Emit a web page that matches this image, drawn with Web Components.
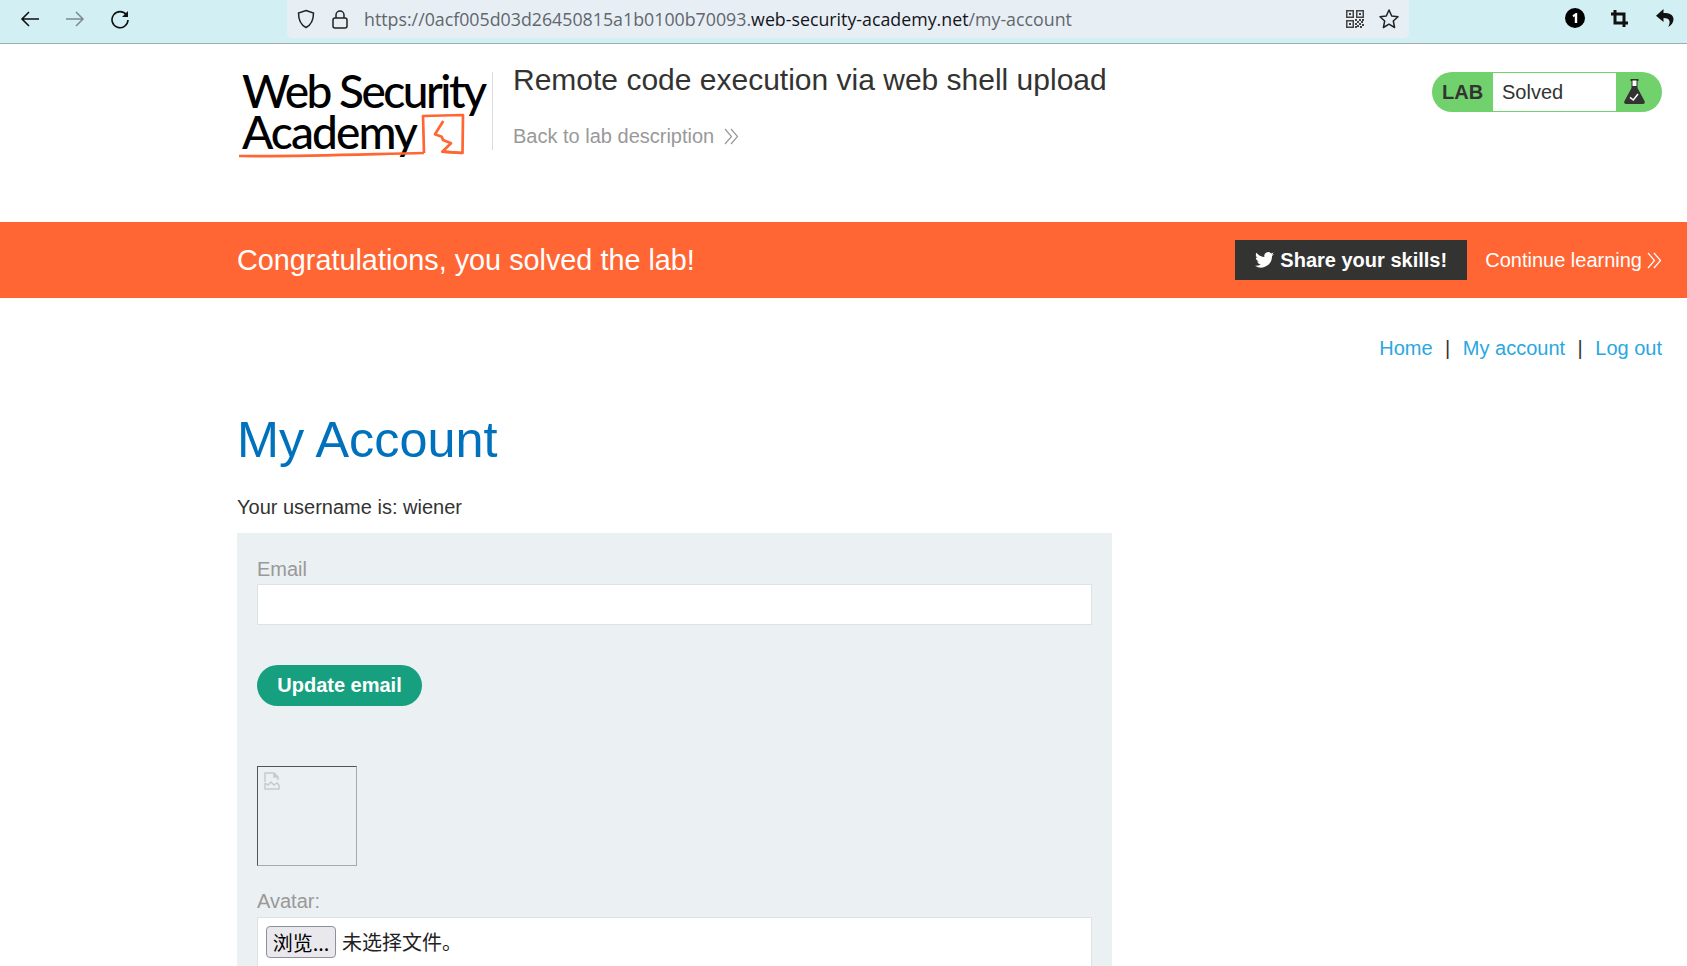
<!DOCTYPE html>
<html lang="en">
<head>
<meta charset="utf-8">
<title>Remote code execution via web shell upload</title>
<style>
  html, body { margin: 0; padding: 0; height: 966px; overflow: hidden; background: #fff; }
  body { font-family: "Liberation Sans", Arial, sans-serif; color: #333332; }
</style>
</head>
<body>
<browser-toolbar></browser-toolbar>
<lab-header></lab-header>
<solved-banner></solved-banner>
<top-nav></top-nav>
<account-page></account-page>

<script>
// Chevrons used by the "back to lab" and "continue learning" links
const chevrons = (color) => `<svg width="15" height="17" viewBox="0 0 15 17" fill="none" stroke="${color}" stroke-width="1.2"><path d="M1 1l6.5 7.5L1 16"/><path d="M7 1l6.5 7.5L7 16"/></svg>`;

class BrowserToolbar extends HTMLElement {
  constructor() {
    super();
    this.attachShadow({ mode: "open" });
    this.shadowRoot.innerHTML = `
      <style>
        :host {
          display: flex;
          align-items: flex-start;
          height: 43px;
          box-sizing: content-box;
          background: #d2eff3;
          border-bottom: 1px solid #9fb0b4;
          font-family: "Open Sans", sans-serif;
        }
        svg { display: block; flex: none; }
        .nav { display: flex; align-items: center; gap: 25px; width: 287px; height: 37px; padding-left: 20px; box-sizing: border-box; }
        .url {
          display: flex; align-items: center;
          width: 1122px; height: 38px;
          background: #e7eff5;
          border-radius: 0 0 5px 5px;
          box-sizing: border-box;
          padding: 0 9px 0 9px;
        }
        .addr { margin-left: 15px; flex: 1; font-size: 17.8px; color: #62666d; white-space: nowrap; }
        .addr b { font-weight: 400; color: #15141a; }
        .ext { flex: 1; display: flex; align-items: center; justify-content: flex-end; height: 36px; }
        .ext span { width: 45px; display: flex; justify-content: center; }
      </style>
      <div class="nav">
        <svg width="20" height="20" viewBox="0 0 20 20" fill="none" stroke="#111" stroke-width="1.6"><path d="M19 10H2M9 3l-7 7 7 7"/></svg>
        <svg width="20" height="20" viewBox="0 0 20 20" fill="none" stroke="#7e8a8d" stroke-width="1.5"><path d="M1 10h17M11 3l7 7-7 7"/></svg>
        <svg width="20" height="20" viewBox="0 0 20 20" fill="none" stroke="#111" stroke-width="1.6"><path d="M16.500 6A8 8 0 1 0 18 11"/><path d="M18 2v6h-6z" fill="#111" stroke="none"/></svg>
      </div>
      <div class="url">
        <svg width="20" height="20" viewBox="0 0 20 20" fill="none" stroke="#222" stroke-width="1.5"><path d="M10 1.500l7.500 2.500c0 7-1.500 11.500-7.500 14.500C4 15.500 2.500 11 2.500 4z"/></svg>
        <svg style="margin-left:15px" width="18" height="20" viewBox="0 0 18 20" fill="none" stroke="#222" stroke-width="1.5"><rect x="2" y="9" width="14" height="10" rx="2"/><path d="M5 9V6a4 4 0 0 1 8 0v3"/></svg>
        <span class="addr">https://0acf005d03d26450815a1b0100b70093.<b>web-security-academy.net</b>/my-account</span>
        <svg width="18" height="18" viewBox="0 0 18 18" fill="#444"><path fill-rule="evenodd" d="M0 0h8v8H0zM1.500 1.500v5h5v-5zM10 0h8v8h-8zM11.500 1.500v5h5v-5zM0 10h8v8H0zM1.500 11.500v5h5v-5z"/><path d="M3 3h2v2H3zM13 3h2v2h-2zM3 13h2v2H3zM9 9h2v2H9zM13 9h2v2h-2zM16 9h2v2h-2zM11 11h2v2h-2zM15 11h2v2h-2zM9 13h2v2H9zM13 13h2v2h-2zM16 14h2v2h-2zM11 15h2v2h-2zM14 16h2v2h-2zM9 16h2v2H9z"/></svg>
        <svg style="margin-left:14px" width="22" height="22" viewBox="0 0 22 22" fill="none" stroke="#222" stroke-width="1.5" stroke-linejoin="round"><path d="M11 2l2.700 6 6.300.7-4.700 4.300 1.300 6.500-5.600-3.300-5.600 3.300 1.300-6.500L2 8.700 8.300 8z"/></svg>
      </div>
      <div class="ext">
        <span><svg width="20" height="20" viewBox="0 0 20 20"><circle cx="10" cy="10" r="10" fill="#000"/><path d="M7.500 7.300l3.300-2.300h1.400v10h-2.400V8.200L8.400 9.300z" fill="#fff"/></svg></span>
        <span><svg width="17" height="17" viewBox="0 0 17 17" fill="none" stroke="#111" stroke-width="3"><path d="M4 0v13h13M0 4h13v13"/></svg></span>
        <span><svg width="18" height="18" viewBox="0 0 18 18"><path d="M7.500 0L0 6.700l7.500 6.300V9c3.500 0 5.500.9 6 3 .4 2-.3 4.200-1.300 6 3.200-1.700 5.300-4.600 5.300-7.700 0-4.500-3.800-6.300-10-6.300z" fill="#111"/></svg></span>
      </div>
    `;
  }
}

class LabHeader extends HTMLElement {
  constructor() {
    super();
    this.attachShadow({ mode: "open" });
    this.shadowRoot.innerHTML = `
      <style>
        :host {
          display: flex;
          align-items: flex-start;
          height: 178px;
          padding: 0 25px 0 237px;
          box-sizing: border-box;
        }
        .logo {
          width: 255px; height: 98px; margin-top: 24px;
          box-sizing: border-box;
          display: flex; flex-direction: column;
          font-family: "Lato", sans-serif;
          font-weight: 500;
          color: #000;
          position: relative;
          font-size: 46px;
          line-height: 41px;
          padding: 2px 0 0 5px;
          flex: none;
        }
        .logo svg { position: absolute; left: 0; top: 0; }
        .logo span { white-space: nowrap; letter-spacing: -1.9px; }
        .logo span.first { letter-spacing: -2.5px; }
        .rule { width: 1px; height: 78px; background: #dcdcdc; margin-top: 28px; flex: none; }
        .text { margin-left: 20px; flex: 1; padding-top: 17px; }
        h2 { margin: 0; font-size: 30px; font-weight: 400; line-height: 38px; color: #333332; white-space: nowrap; }
        a { display: flex; align-items: center; gap: 10px; margin-top: 24px; font-size: 20px; line-height: 26px; color: #999; text-decoration: none; white-space: nowrap; }
        lab-status { margin-top: 28px; }
      </style>
      <div class="logo">
        <span class="first">Web Security</span>
        <span>Academy</span>
        <svg width="255" height="98" viewBox="0 0 255 98" fill="none" stroke="#ff6633" stroke-width="2.700" stroke-linejoin="round">
          <path d="M2 88c50 1 103-1 185-3"/>
          <path d="M187 85l-1-37 40-1-.5 38-20-1.300"/>
          <path d="M206.300 53l-8.300 13.300 6.700 2.400 1.300 3.300 8 3.300-8.700 8.400 19.500 1.300"/>
        </svg>
      </div>
      <div class="rule"></div>
      <div class="text">
        <h2>Remote code execution via web shell upload</h2>
        <a href="#">Back to lab description ${chevrons("#999")}</a>
      </div>
      <lab-status></lab-status>
    `;
  }
}

class LabStatus extends HTMLElement {
  constructor() {
    super();
    this.attachShadow({ mode: "open" });
    this.shadowRoot.innerHTML = `
      <style>
        :host {
          display: flex;
          align-items: stretch;
          width: 230px; height: 40px;
          box-sizing: border-box;
          background: #70d16d;
          border-radius: 20px;
          padding: 1px 0;
          font-size: 20px;
          color: #333332;
        }
        .tag { width: 61px; box-sizing: border-box; padding-left: 10px; font-weight: 700; line-height: 38px; }
        .state { width: 123px; background: #fff; padding-left: 9px; box-sizing: border-box; line-height: 38px; }
        .flask { flex: 1; display: flex; align-items: center; padding-left: 8px; }
      </style>
      <div class="tag">LAB</div>
      <div class="state">Solved</div>
      <div class="flask">
        <svg width="21" height="26" viewBox="0 0 21 26"><path d="M6.500 0h8v2h-1v7l7 13c.8 1.800 0 3-1.500 3H2c-1.500 0-2.300-1.200-1.500-3l7-13V2h-1z" fill="#333332"/><path d="M8.500 1.500h4V7h-4z" fill="#fff"/><path d="M6 18.300l3.300 2.700 4.700-6" fill="none" stroke="#fff" stroke-width="1.500"/></svg>
      </div>
    `;
  }
}

class SolvedBanner extends HTMLElement {
  constructor() {
    super();
    this.attachShadow({ mode: "open" });
    this.shadowRoot.innerHTML = `
      <style>
        :host {
          display: flex;
          align-items: center;
          height: 76px;
          background: #ff6633;
          color: #fff;
          padding: 0 25px 0 237px;
          box-sizing: border-box;
        }
        h4 { margin: 0; flex: 1; font-size: 28.800px; font-weight: 400; white-space: nowrap; }
        .share {
          display: flex; align-items: center; justify-content: center; gap: 6px;
          width: 232px; height: 40px;
          background: #333332;
          font-size: 20px; font-weight: 700;
        }
        a { display: flex; align-items: center; gap: 5px; margin-left: 18px; font-size: 20px; color: #fff; text-decoration: none; white-space: nowrap; }
      </style>
      <h4>Congratulations, you solved the lab!</h4>
      <div class="share">
        <svg width="19" height="16" viewBox="0 0 24 20" fill="#fff"><path d="M24 2.400c-.9.400-1.800.7-2.800.8 1-.6 1.800-1.600 2.200-2.700-1 .6-2 1-3.100 1.200A4.900 4.900 0 0 0 11.900 6.200C7.800 6 4.200 4 1.700.9c-1.300 2.200-.7 5.100 1.500 6.600-.8 0-1.600-.2-2.200-.6 0 2.300 1.600 4.400 3.900 4.900-.7.200-1.500.2-2.200.1.600 2 2.400 3.400 4.600 3.400A9.900 9.900 0 0 1 0 17.300 14 14 0 0 0 21.500 5c1-.7 1.800-1.600 2.500-2.600z"/></svg>
        <span>Share your skills!</span>
      </div>
      <a href="#">Continue learning ${chevrons("#fff")}</a>
    `;
  }
}

class TopNav extends HTMLElement {
  constructor() {
    super();
    this.attachShadow({ mode: "open" });
    this.shadowRoot.innerHTML = `
      <style>
        :host {
          display: flex;
          justify-content: flex-end;
          gap: 12.500px;
          padding: 37px 25px 0 0;
          height: 109px;
          box-sizing: border-box;
          font-size: 20px;
          line-height: 26px;
          color: #333332;
        }
        a { color: #29a7e0; text-decoration: none; }
      </style>
      <a href="#">Home</a><span>|</span><a href="#">My account</a><span>|</span><a href="#">Log out</a>
    `;
  }
}

class AccountPage extends HTMLElement {
  constructor() {
    super();
    this.attachShadow({ mode: "open" });
    this.shadowRoot.innerHTML = `
      <style>
        :host { display: block; padding-left: 237px; }
        h1 { margin: 0; font-size: 50.400px; font-weight: 400; line-height: 66px; color: #0071bc; white-space: nowrap; }
        p { margin: 21px 0 0; font-size: 20px; line-height: 26px; color: #333332; }
        .panel {
          width: 875px;
          height: 460px;
          margin-top: 13px;
          padding: 23px 20px 0;
          box-sizing: border-box;
          background: #ebf0f2;
        }
        label { display: block; font-size: 20px; line-height: 26px; color: #999; }
        .field { height: 41px; margin-top: 2px; background: #fff; border: 1px solid #dde2e4; box-sizing: border-box; }
        .btn {
          display: flex; align-items: center; justify-content: center;
          width: 165px; height: 41px; margin-top: 40px;
          background: #17a07f; color: #fff;
          border-radius: 21px;
          font-size: 20px; font-weight: 700;
        }
        .avatar {
          width: 100px; height: 100px; margin: 60px 0 22px;
          box-sizing: border-box;
          border: 1px solid; border-color: #555 #aaa #aaa #555;
          padding: 5px 6px;
        }
        .avatar svg { display: block; }
        .field.file {
          height: 70px;
          margin-top: 3px;
          display: flex; align-items: flex-start; gap: 6px;
          padding: 8px 8px;
          font-family: "Noto Sans CJK SC", sans-serif;
          font-size: 20px;
          color: #222;
        }
        .file .pick {
          width: 70px; height: 32px; box-sizing: border-box;
          display: flex; align-items: center; justify-content: center;
          background: #e9e9ed; color: #000;
          border: 1px solid #8f8f9d; border-radius: 4px;
          white-space: nowrap;
        }
        .file .none { line-height: 32px; }
      </style>
      <h1>My Account</h1>
      <p>Your username is: wiener</p>
      <div class="panel">
        <label>Email</label>
        <div class="field"></div>
        <div class="btn">Update email</div>
        <div class="avatar">
          <svg width="16" height="18" viewBox="0 0 16 18" fill="none" stroke="#c6cacc" stroke-width="1.500"><path d="M14 8V5l-4-4H1v9"/><path d="M10 1v4h4" fill="#c6cacc"/><path d="M1 11l3 2 3-3 3 3 3-2 2 2M1 11v6h14v-4"/></svg>
        </div>
        <label>Avatar:</label>
        <div class="field file"><span class="pick">浏览...</span><span class="none">未选择文件。</span></div>
      </div>
    `;
  }
}

customElements.define("lab-status", LabStatus);
customElements.define("browser-toolbar", BrowserToolbar);
customElements.define("lab-header", LabHeader);
customElements.define("solved-banner", SolvedBanner);
customElements.define("top-nav", TopNav);
customElements.define("account-page", AccountPage);
</script>
</body>
</html>
